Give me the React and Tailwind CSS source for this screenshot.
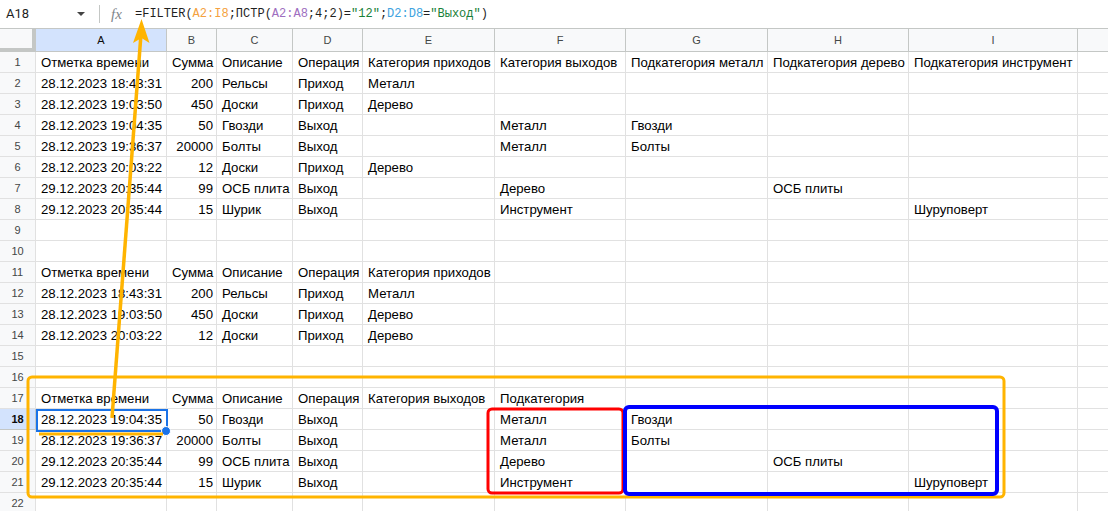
const colW = ["w-[131px]", "w-[50px]", "w-[76px]", "w-[70px]", "w-[132px]", "w-[131px]", "w-[142px]", "w-[141px]", "w-[169px]"];
const letters = ["A", "B", "C", "D", "E", "F", "G", "H", "I"];

const head = ["Отметка времени", "Сумма", "Описание", "Операция"];

const rows = [
  [...head, "Категория приходов", "Категория выходов", "Подкатегория металл", "Подкатегория дерево", "Подкатегория инструмент"],
  ["28.12.2023 18:43:31", "200", "Рельсы", "Приход", "Металл"],
  ["28.12.2023 19:03:50", "450", "Доски", "Приход", "Дерево"],
  ["28.12.2023 19:04:35", "50", "Гвозди", "Выход", "", "Металл", "Гвозди"],
  ["28.12.2023 19:36:37", "20000", "Болты", "Выход", "", "Металл", "Болты"],
  ["28.12.2023 20:03:22", "12", "Доски", "Приход", "Дерево"],
  ["29.12.2023 20:35:44", "99", "ОСБ плита", "Выход", "", "Дерево", "", "ОСБ плиты"],
  ["29.12.2023 20:35:44", "15", "Шурик", "Выход", "", "Инструмент", "", "", "Шуруповерт"],
  [],
  [],
  [...head, "Категория приходов"],
  ["28.12.2023 18:43:31", "200", "Рельсы", "Приход", "Металл"],
  ["28.12.2023 19:03:50", "450", "Доски", "Приход", "Дерево"],
  ["28.12.2023 20:03:22", "12", "Доски", "Приход", "Дерево"],
  [],
  [],
  [...head, "Категория выходов", "Подкатегория"],
  ["28.12.2023 19:04:35", "50", "Гвозди", "Выход", "", "Металл", "Гвозди"],
  ["28.12.2023 19:36:37", "20000", "Болты", "Выход", "", "Металл", "Болты"],
  ["29.12.2023 20:35:44", "99", "ОСБ плита", "Выход", "", "Дерево", "", "ОСБ плиты"],
  ["29.12.2023 20:35:44", "15", "Шурик", "Выход", "", "Инструмент", "", "", "Шуруповерт"],
  [],
];

function FormulaBar() {
  return (
    <div className="h-[28px] flex items-center bg-white">
      <div className="w-[99px] flex items-center pl-[6px] pr-[14px] justify-between text-[13px] text-[#1f1f1f] font-['Roboto','Liberation_Sans',sans-serif]">
        <span>A18</span>
        <span className="w-0 h-0 border-l-[4px] border-r-[4px] border-t-[4px] border-l-transparent border-r-transparent border-t-[#444]" />
      </div>
      <div className="w-px h-[18px] bg-[#c4c7c5]" />
      <span className="ml-[11px] w-[24px] text-[15px] italic text-[#80868b] font-['Liberation_Serif',serif]">fx</span>
      <div className="text-[12px] font-['Liberation_Mono',monospace] text-[#1f1f1f] whitespace-pre">
        <span>=FILTER(</span>
        <span className="text-[#f4a140]">A2:I8</span>
        <span>;ПСТР(</span>
        <span className="text-[#9e6ec0]">A2:A8</span>
        <span>;4;2)=</span>
        <span className="text-[#188038]">"12"</span>
        <span>;</span>
        <span className="text-[#3ea3e0]">D2:D8</span>
        <span>=</span>
        <span className="text-[#188038]">"Выход"</span>
        <span>)</span>
      </div>
    </div>
  );
}

function HeaderRow() {
  return (
    <div className="flex h-[24px] border-t border-[#c4c7c5]">
      <div className="w-[36px] shrink-0 bg-[#f8f9fa] border-r-[4px] border-b-[4px] border-[#c4c7c5]" />
      {letters.map((l, i) => (
        <div
          key={l}
          className={`${colW[i]} shrink-0 flex items-center justify-center text-[11px] border-r border-b border-[#c4c7c5] ${i === 0 ? "bg-[#d3e3fd] text-[#0b0b0b] font-medium" : "bg-[#f8f9fa] text-[#444746]"}`}
        >
          {l}
        </div>
      ))}
      <div className="flex-1 bg-[#f8f9fa] border-b border-[#c4c7c5]" />
    </div>
  );
}

function Row({ n, cells }) {
  const sel = n === 18;
  const isHead = n === 1 || n === 11 || n === 17;
  return (
    <div className="flex h-[21px]">
      <div
        className={`w-[36px] shrink-0 flex items-center justify-center text-[11px] border-r border-b ${sel ? "bg-[#d3e3fd] text-[#0b0b0b] font-semibold border-[#c4c7c5]" : "bg-[#f8f9fa] text-[#444746] border-[#e1e1e1]"}`}
      >
        {n}
      </div>
      {letters.map((l, i) => {
        const v = cells[i] || "";
        return (
          <div
            key={l}
            className={`${colW[i]} shrink-0 border-r border-b border-[#e1e1e1] pl-[5px] pt-[1px] text-[13.2px] leading-[20px] whitespace-nowrap overflow-hidden text-black ${i === 1 && !isHead ? "text-right pr-[3px]" : "pr-[2px]"}`}
          >
            {v}
          </div>
        );
      })}
      <div className="flex-1 border-b border-[#e1e1e1]" />
    </div>
  );
}

export default function App() {
  return (
    <div className="relative w-[1108px] h-[511px] overflow-hidden bg-white font-['Liberation_Sans',Arial,sans-serif]">
      <FormulaBar />
      <HeaderRow />
      {rows.map((r, i) => (
        <Row key={i} n={i + 1} cells={r} />
      ))}

      {/* selected cell A18 */}
      <div className="absolute left-[36px] top-[409px] w-[132px] h-[23px] border-2 border-[#1a73e8]" />
      <div className="absolute left-[161px] top-[426px] w-[10px] h-[10px] rounded-full bg-[#1a73e8] border border-white" />

      {/* annotations */}
      <svg className="absolute inset-0 pointer-events-none" width="1108" height="511">
        <rect x="28" y="377" width="976" height="120" rx="4" fill="none" stroke="#ffb400" strokeWidth="3" />
        <rect x="488" y="409" width="135" height="84" rx="4" fill="none" stroke="#ff0000" strokeWidth="3" />
        <rect x="625" y="407" width="372" height="87" rx="4" fill="none" stroke="#0000ff" strokeWidth="4" />
        <line x1="39" y1="434" x2="163" y2="434" stroke="#ffb400" strokeWidth="3" />
        <line x1="112" y1="418" x2="141" y2="34" stroke="#ffb400" strokeWidth="3.5" />
        <polygon points="141.5,19 149.5,43 141.5,38 133,43" fill="#ffb400" />
      </svg>
    </div>
  );
}
